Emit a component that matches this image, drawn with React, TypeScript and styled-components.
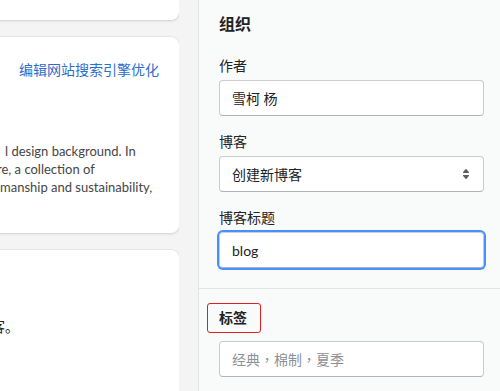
import React from "react";
import styled, { createGlobalStyle } from "styled-components";

const Global = createGlobalStyle`
  html, body { margin: 0; padding: 0; }
  body {
    overflow: hidden;
    font-family: Lato, "Noto Sans CJK SC", sans-serif;
    color: #202223;
    -webkit-font-smoothing: antialiased;
  }
`;

const Page = styled.div`
  display: flex;
  width: 500px;
  height: 391px;
  background: #f4f4f4;
  overflow: hidden;
`;

const LeftColumn = styled.div`
  flex: 0 0 179px;
  margin-right: 19px;
  overflow: hidden;
  display: flex;
  flex-direction: column;
  gap: 17px;
  margin-top: -60px;
`;

const Card = styled.div<{ $height: number }>`
  flex: 0 0 auto;
  box-sizing: border-box;
  height: ${(p) => p.$height}px;
  margin-left: -320px;
  width: 499px;
  background: #fff;
  border-radius: 8px;
  box-shadow: 0 0 0 1px rgba(63, 63, 68, 0.05), 0 1px 3px 0 rgba(63, 63, 68, 0.15);
  padding: 0 20px;
`;

const CardHeader = styled.div`
  display: flex;
  justify-content: flex-end;
  padding-top: 23px;
`;

const Link = styled.a`
  font-size: 14px;
  line-height: 20px;
  color: #2c6ecb;
  text-decoration: none;
  cursor: pointer;
`;

const Body = styled.div<{ $top: number }>`
  margin-top: ${(p) => p.$top}px;
  margin-left: 300px;
`;

const Line = styled.div<{ $indent: number; $bold?: boolean; $dark?: boolean; $gap?: number; $size?: number }>`
  white-space: nowrap;
  font-size: ${(p) => p.$size ?? 13}px;
  line-height: 18px;
  margin-left: ${(p) => p.$indent}px;
  margin-top: ${(p) => p.$gap ?? 0}px;
  font-weight: ${(p) => (p.$bold ? 600 : 400)};
  color: ${(p) => (p.$dark ? "#202223" : "#454545")};
`;

const RightPanel = styled.aside`
  flex: 1;
  background: #f9fafa;
  border-left: 1px solid #e1e3e5;
`;

const Section = styled.section<{ $top: number; $bottom: number; $divider?: boolean }>`
  padding: ${(p) => p.$top}px 16px ${(p) => p.$bottom}px 20px;
  border-bottom: ${(p) => (p.$divider ? "1px solid #e1e3e5" : "none")};
  display: flex;
  flex-direction: column;
`;

const Title = styled.h2`
  margin: 0 0 20px;
  font-size: 16px;
  line-height: 24px;
  font-weight: 600;
`;

const Field = styled.div`
  display: flex;
  flex-direction: column;
  & + & {
    margin-top: 16px;
  }
`;

const Label = styled.label`
  font-size: 14px;
  line-height: 20px;
  margin-bottom: 4px;
`;

const HighlightLabel = styled.div`
  align-self: flex-start;
  margin-left: -12px;
  padding: 6px 13px 6px 11px;
  border: 1px solid #e02020;
  border-radius: 3px;
  font-size: 14px;
  line-height: 16px;
  font-weight: 700;
  margin-bottom: 8px;
`;

const Input = styled.input<{ $focused?: boolean; $cjkPunct?: boolean }>`
  box-sizing: border-box;
  height: 36px;
  width: 100%;
  padding: 0 12px;
  border: 1px solid #c9cccf;
  border-bottom-color: #aeb4b9;
  border-radius: 4px;
  background: #fff;
  font-family: ${(p) =>
    p.$cjkPunct ? `Lato, "Noto Sans CJK TC", sans-serif` : "inherit"};
  font-size: 14px;
  color: #202223;
  outline: none;
  box-shadow: ${(p) => (p.$focused ? "0 0 0 2px #458fff" : "none")};
  &::placeholder {
    color: #8c9196;
  }
`;

const SelectBox = styled.div`
  box-sizing: border-box;
  height: 36px;
  display: flex;
  align-items: center;
  justify-content: space-between;
  padding: 0 7px 0 12px;
  border: 1px solid #c9cccf;
  border-bottom-color: #aeb4b9;
  border-radius: 4px;
  background: #fff;
  font-size: 14px;
`;

const SelectIcon = () => (
  <svg width="20" height="20" viewBox="0 0 20 20" fill="#5c5f62">
    <path d="M7.676 9h4.648c.563 0 .879-.603.53-1.014l-2.323-2.746a.708.708 0 0 0-1.062 0l-2.324 2.746c-.347.411-.032 1.014.531 1.014zm4.648 2h-4.648c-.563 0-.878.603-.53 1.014l2.323 2.746c.27.32.792.32 1.062 0l2.323-2.746c.349-.411.033-1.014-.53-1.014z" />
  </svg>
);

export default function App() {
  return (
    <Page>
      <Global />
      <LeftColumn>
        <Card $height={80} />
        <Card $height={196}>
          <CardHeader>
            <Link>编辑网站搜索引擎优化</Link>
          </CardHeader>
          <Body $top={62}>
            <Line $indent={5}>l design background. In</Line>
            <Line $indent={-3}>re, a collection of</Line>
            <Line $indent={0}>manship and sustainability,</Line>
          </Body>
        </Card>
        <Card $height={200}>
          <Body $top={24}>
            <Line $indent={-6} $bold $dark>s</Line>
            <Line $indent={-9} $dark $gap={26} $size={14}>客。</Line>
          </Body>
        </Card>
      </LeftColumn>
      <RightPanel>
        <Section $top={12} $bottom={20} $divider>
          <Title>组织</Title>
          <Field>
            <Label>作者</Label>
            <Input defaultValue="雪柯 杨" />
          </Field>
          <Field>
            <Label>博客</Label>
            <SelectBox>
              <span>创建新博客</span>
              <SelectIcon />
            </SelectBox>
          </Field>
          <Field>
            <Label>博客标题</Label>
            <Input $focused defaultValue="blog" />
          </Field>
        </Section>
        <Section $top={14} $bottom={0}>
          <HighlightLabel>标签</HighlightLabel>
          <Input $cjkPunct placeholder="经典，棉制，夏季" />
        </Section>
      </RightPanel>
    </Page>
  );
}
